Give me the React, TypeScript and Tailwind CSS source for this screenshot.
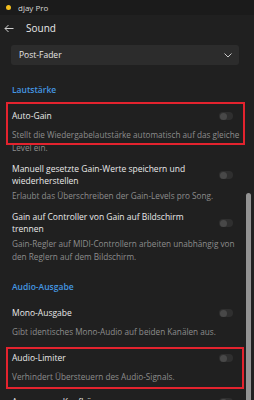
import React from 'react';

interface SettingProps {
  title: string[];
  desc: string[];
}

function Toggle() {
  return (
    <div className="flex h-[8px] w-[14px] shrink-0 items-center rounded-full bg-[#2f2f2f] px-[0.5px]">
      <div className="h-[7px] w-[7px] rounded-full bg-[#484848]" />
    </div>
  );
}

function Setting({ title, desc }: SettingProps) {
  return (
    <div>
      <div className="flex min-h-[20px] items-center justify-between pl-[12px] pr-[13px]">
        <div className="max-w-[190px] text-[8.5px] leading-[12px] text-[#e9e9e9]">
          {title.map((t) => (
            <div key={t}>{t}</div>
          ))}
        </div>
        <Toggle />
      </div>
      <div className="mt-[2px] pl-[12px] text-[8.2px] leading-[13px] text-[#8d8d8d]">
        {desc.map((d) => (
          <div key={d} className="whitespace-nowrap">{d}</div>
        ))}
      </div>
    </div>
  );
}

function SectionHead({ label }: { label: string }) {
  return <div className="pl-[12px] text-[8.5px] font-semibold leading-[12px] text-[#4497e2]">{label}</div>;
}

export default function App() {
  return (
    <div
      className="h-[400px] w-[254px] overflow-hidden bg-[#202020]"
      style={{ fontFamily: '"Open Sans", "Noto Sans", sans-serif' }}
    >
      {/* title bar */}
      <div className="flex h-[15px] items-center bg-[#1b1b1b] pl-[6px]">
        <div className="h-[5px] w-[5px] rounded-full bg-[#f3be1e]" />
        <span className="ml-[7px] text-[8px] text-[#d6d6d6]">djay Pro</span>
      </div>

      <div className="flex h-[385px]">
        <div className="flex-1 overflow-hidden">
          {/* header */}
          <div className="flex h-[26px] items-center pl-[4px]">
            <svg width="10" height="9" viewBox="0 0 10 9" fill="none" stroke="#cfcfcf" strokeWidth="1">
              <path d="M9.5 4.5H1M4.5 1L1 4.5L4.5 8" />
            </svg>
            <span className="ml-[12px] text-[10px] text-[#e8e8e8]">Sound</span>
          </div>

          {/* dropdown */}
          <div className="ml-[11px] mr-[7px] mt-[4px] flex h-[20px] items-center justify-between rounded-[3px] bg-[#2c2c2c] pl-[8px] pr-[7px]">
            <span className="text-[8.5px] text-[#e6e6e6]">Post-Fader</span>
            <svg width="8" height="5" viewBox="0 0 8 5" fill="none" stroke="#c8c8c8" strokeWidth="1">
              <path d="M0.5 0.5L4 4L7.5 0.5" />
            </svg>
          </div>

          <div className="mt-[19px]">
            <SectionHead label="Lautstärke" />
          </div>

          <div className="relative mt-[10px]">
            <Setting
              title={['Auto-Gain']}
              desc={['Stellt die Wiedergabelautstärke automatisch auf das gleiche', 'Level ein.']}
            />
            {/* annotation */}
            <div className="absolute left-[6px] right-[1px] top-[-4px] h-[43px] border-[2px] border-[#e3232e]" />
          </div>

          <div className="mt-[9px]">
            <Setting
              title={['Manuell gesetzte Gain-Werte speichern und', 'wiederherstellen']}
              desc={['Erlaubt das Überschreiben der Gain-Levels pro Song.']}
            />
          </div>

          <div className="mt-[9px]">
            <Setting
              title={['Gain auf Controller von Gain auf Bildschirm', 'trennen']}
              desc={['Gain-Regler auf MIDI-Controllern arbeiten unabhängig von', 'den Reglern auf dem Bildschirm.']}
            />
          </div>

          <div className="mt-[18px]">
            <SectionHead label="Audio-Ausgabe" />
          </div>

          <div className="mt-[10px]">
            <Setting title={['Mono-Ausgabe']} desc={['Gibt identisches Mono-Audio auf beiden Kanälen aus.']} />
          </div>

          <div className="relative mt-[10px]">
            <Setting title={['Audio-Limiter']} desc={['Verhindert Übersteuern des Audio-Signals.']} />
            <div className="absolute left-[6px] right-[2px] top-[-1px] h-[42px] border-[2px] border-[#e3232e]" />
          </div>

          <div className="mt-[9px]">
            <Setting title={['Ausgang am Kopfhörer']} desc={['']} />
          </div>
        </div>

        {/* scrollbar */}
        <div className="flex w-[8px] flex-col">
          <div className="mt-[178px] w-[5px] flex-1 rounded-t-full bg-[#939393]" />
        </div>
      </div>
    </div>
  );
}
